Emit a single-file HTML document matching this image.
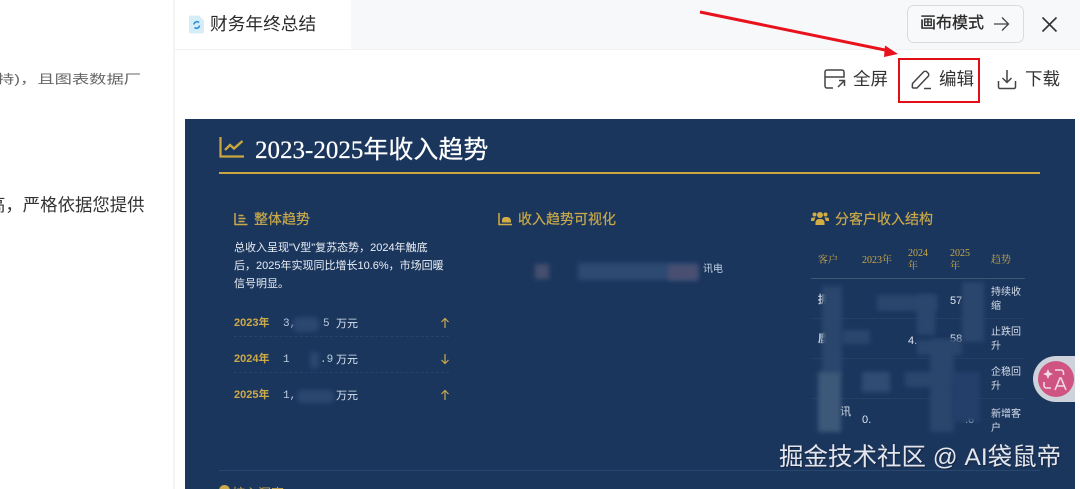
<!DOCTYPE html>
<html lang="zh">
<head>
<meta charset="utf-8">
<style>
html,body{margin:0;padding:0;width:1080px;height:489px;overflow:hidden;background:#fff}
body{position:relative;font-family:"Liberation Sans","Noto Sans CJK SC",sans-serif;color:#222}
.a{position:absolute;white-space:nowrap;line-height:1}
.b{position:absolute;filter:blur(2.500px)}
.g{color:#c9a94a;-webkit-text-stroke:.2px #c9a94a}
.yr{left:234px;font-size:11px;font-weight:700;color:#cdaa48}
.val{font-family:"Liberation Mono","Noto Sans CJK SC",monospace;font-size:11px;color:#bccbe0}
.unit{left:336px;font-size:11px;color:#dbe4f0}
.arr{position:absolute;left:440px}
.th{font-family:"Liberation Serif","Noto Serif CJK SC",serif;font-size:10px;color:#c9a94a;line-height:13px}
.td{font-size:10px;color:#d5dde8;line-height:14px;left:991px}
.line{position:absolute;height:1px}
</style>
</head>
<body>
<!-- left panel -->
<div class="a" style="left:-3px;top:71px;font-size:17.300px;color:#666;transform:scaleY(.72)">持)，且图表数据厂</div>
<div class="a" style="left:-12px;top:197px;font-size:17.400px;color:#333">高，严格依据您提供</div>
<div style="position:absolute;left:173px;top:0;width:2px;height:489px;background:#f3f4f6"></div>

<!-- tab bar -->
<div style="position:absolute;left:175px;top:0;right:0;height:50px;background:#f7f8fa"></div>
<div style="position:absolute;left:175px;top:0;width:176px;height:50px;background:#fff"></div>
<div style="position:absolute;left:175px;top:49px;right:0;height:1px;background:#f1f2f4"></div>
<svg style="position:absolute;left:189px;top:15px" width="16" height="19" viewBox="0 0 16 19">
<path d="M2 .5h8l5 5v11a2 2 0 0 1-2 2H2a2 2 0 0 1-2-2V2.500A2 2 0 0 1 2 .5z" fill="#d5ecf9"/>
<path d="M5 9.500a3 3 0 0 1 5-2M10.500 10.500a3 3 0 0 1-5 2" fill="none" stroke="#2b8fd8" stroke-width="1.600"/>
</svg>
<div class="a" style="left:210px;top:16px;font-size:17.700px;color:#2b2b2b">财务年终总结</div>

<div style="position:absolute;left:907px;top:5px;width:115px;height:36px;border:1px solid #d9dbe0;border-radius:7px;background:#f8f9fa"></div>
<div class="a" style="left:920px;top:16px;font-size:16px;color:#2a2a2a;-webkit-text-stroke:.3px #2a2a2a">画布模式</div>
<svg style="position:absolute;left:992px;top:14px" width="18" height="20" viewBox="0 0 18 20" fill="none" stroke="#444" stroke-width="1.300"><path d="M2 10h14M10 3.500l6.500 6.500-6.500 6.500"/></svg>
<svg style="position:absolute;left:1041px;top:16px" width="17" height="17" viewBox="0 0 17 17" fill="none" stroke="#333" stroke-width="1.600"><path d="M1.500 1.500l14 14M15.500 1.500l-14 14"/></svg>

<!-- toolbar -->
<svg style="position:absolute;left:824px;top:69px" width="22" height="21" viewBox="0 0 22 21" fill="none" stroke="#444" stroke-width="1.500"><path d="M9 19H3a2 2 0 0 1-2-2V3a2 2 0 0 1 2-2h15a2 2 0 0 1 2 2v5H1"/><path d="M14 18l6-6M15 11.500h5.500V17"/></svg>
<div class="a" style="left:853px;top:71px;font-size:17.500px;color:#333">全屏</div>
<svg style="position:absolute;left:910px;top:68px" width="23" height="23" viewBox="0 0 23 23" fill="none" stroke="#444" stroke-width="1.500"><path d="M2.500 15.500L13.500 4a2.500 2.500 0 0 1 3.500 0l1 1a2.500 2.500 0 0 1 0 3.500L7 20H3.500a1.200 1.200 0 0 1-1.200-1.200z"/><path d="M14 20.500h7"/></svg>
<div class="a" style="left:939px;top:71px;font-size:17.500px;color:#333">编辑</div>
<svg style="position:absolute;left:997px;top:69px" width="20" height="21" viewBox="0 0 20 21" fill="none" stroke="#444" stroke-width="1.500"><path d="M10 1v12M5.500 9l4.500 4.500L14.500 9M1.500 12v6a1.500 1.500 0 0 0 1.500 1.500h14a1.500 1.500 0 0 0 1.500-1.500v-6"/></svg>
<div class="a" style="left:1025px;top:71px;font-size:17.500px;color:#333">下载</div>

<!-- navy doc -->
<div style="position:absolute;left:185px;top:119px;width:890px;height:370px;background:#1b365d"></div>

<svg style="position:absolute;left:219px;top:136px" width="26" height="23" viewBox="0 0 26 23" fill="none" stroke="#c9a63f" stroke-width="2.200"><path d="M1.500 1v19.500H25"/><path d="M6 14l5-5 4 3.500L23.500 5" stroke-width="2.400"/></svg>
<div class="a" style="left:255px;top:138px;font-size:25px;color:#fff;-webkit-text-stroke:.2px #fff;font-family:'Liberation Serif','Noto Sans CJK SC',serif">2023-2025年收入趋势</div>
<div style="position:absolute;left:219px;top:172px;width:821px;height:1.500px;background:#c9a63f"></div>

<!-- col 1 -->
<svg style="position:absolute;left:234px;top:212px" width="14" height="14" viewBox="0 0 14 14" fill="none" stroke="#c9a94a" stroke-width="1.500"><path d="M1 1v11.500h12.500M4.500 3.500h5M4.500 6.500h7M4.500 9.500h6"/></svg>
<div class="a g" style="left:254px;top:212px;font-size:14px">整体趋势</div>
<div class="a" style="left:234px;top:239px;font-size:11px;line-height:18px;color:#eaeff5;white-space:normal;width:215px">总收入呈现"V型"复苏态势，2024年触底后，2025年实现同比增长10.6%，市场回暖信号明显。</div>

<div class="a yr" style="top:318px">2023年</div>
<div class="a val" style="left:283px;top:319px">3,</div>
<div class="a val" style="left:323px;top:319px">5</div>
<div class="a unit" style="top:319px">万元</div>
<svg class="arr" style="top:317px" width="10" height="12" viewBox="0 0 10 12" fill="none" stroke="#c9a94a" stroke-width="1.200"><path d="M5 11V1.500M1.500 5L5 1.500 8.500 5"/></svg>
<div class="line" style="left:234px;top:336px;width:215px;border-top:1px dashed #264469;height:0"></div>

<div class="a yr" style="top:354px">2024年</div>
<div class="a val" style="left:283px;top:355px">1</div>
<div class="a val" style="left:320px;top:355px">.9</div>
<div class="a unit" style="top:355px">万元</div>
<svg class="arr" style="top:353px" width="10" height="12" viewBox="0 0 10 12" fill="none" stroke="#c9a94a" stroke-width="1.200"><path d="M5 1v9.500M1.500 7L5 10.500 8.500 7"/></svg>
<div class="line" style="left:234px;top:372px;width:215px;border-top:1px dashed #264469;height:0"></div>

<div class="a yr" style="top:390px">2025年</div>
<div class="a val" style="left:283px;top:391px">1,</div>
<div class="a unit" style="top:391px">万元</div>
<svg class="arr" style="top:389px" width="10" height="12" viewBox="0 0 10 12" fill="none" stroke="#c9a94a" stroke-width="1.200"><path d="M5 11V1.500M1.500 5L5 1.500 8.500 5"/></svg>

<div class="b" style="left:293px;top:317px;width:26px;height:15px;background:#2a4770;border-radius:5px"></div>
<div class="b" style="left:310px;top:352px;width:9px;height:16px;background:#2a4770"></div>
<div class="b" style="left:297px;top:390px;width:37px;height:13px;background:#2a4770;border-radius:5px"></div>

<div class="line" style="left:219px;top:470px;width:821px;background:#28476e"></div>
<div style="position:absolute;left:219px;top:485px;width:11px;height:11px;border-radius:50%;background:#c9a94a"></div>
<div class="a" style="left:232px;top:487px;font-size:13px;color:#c9a94a">核心洞察</div>

<!-- col 2 -->
<svg style="position:absolute;left:498px;top:212px" width="15" height="14" viewBox="0 0 15 14"><path d="M1 1v11.500h13" fill="none" stroke="#d2ad45" stroke-width="1.500"/><path d="M4 10.500V8a3 3 0 0 1 3-3h2a4 4 0 0 1 4 4v1.500z" fill="#d2ad45"/></svg>
<div class="a g" style="left:518px;top:212px;font-size:14px">收入趋势可视化</div>
<div class="b" style="left:535px;top:264px;width:14px;height:15px;background:#454f6e"></div>
<div class="b" style="left:578px;top:263px;width:120px;height:17px;background:#2d4a72"></div>
<div class="b" style="left:668px;top:265px;width:30px;height:15px;background:#4a4f72"></div>
<div class="a" style="left:703px;top:265px;font-size:10px;color:#c5d3e6">讯电</div>

<!-- col 3 -->
<svg style="position:absolute;left:811px;top:211px" width="18" height="15" viewBox="0 0 18 15" fill="#d2ad45"><circle cx="9" cy="4" r="3"/><circle cx="3.500" cy="3.500" r="2"/><circle cx="14.500" cy="3.500" r="2"/><path d="M4.500 14v-2.500A3.500 3.500 0 0 1 8 8h2a3.500 3.500 0 0 1 3.500 3.500V14z"/><path d="M0 10V8.500A2 2 0 0 1 2 6.500h2.500L3 10zM18 10V8.500a2 2 0 0 0-2-2h-2.500L15 10z"/></svg>
<div class="a g" style="left:835px;top:212px;font-size:14px">分客户收入结构</div>

<div class="a th" style="left:818px;top:254px">客户</div>
<div class="a th" style="left:862px;top:254px">2023年</div>
<div class="a th" style="left:908px;top:247px">2024<br>年</div>
<div class="a th" style="left:950px;top:247px">2025<br>年</div>
<div class="a th" style="left:991px;top:254px">趋势</div>
<div class="line" style="left:811px;top:278px;width:214px;background:#3d5876"></div>
<div class="line" style="left:811px;top:318px;width:214px;background:#253f66"></div>
<div class="line" style="left:811px;top:358px;width:214px;background:#253f66"></div>
<div class="line" style="left:811px;top:398px;width:214px;background:#253f66"></div>

<div class="a td" style="top:286px">持续收<br>缩</div>
<div class="a td" style="top:326px">止跌回<br>升</div>
<div class="a td" style="top:366px">企稳回<br>升</div>
<div class="a td" style="top:408px">新增客<br>户</div>
<div class="a" style="left:950px;top:296px;font-size:11px;color:#dfe6ef">57</div>
<div class="a" style="left:950px;top:334px;font-size:11px;color:#dfe6ef">58</div>
<div class="a" style="left:908px;top:336px;font-size:11px;color:#dfe6ef">4.</div>
<div class="a" style="left:862px;top:415px;font-size:11px;color:#dfe6ef">0.</div>
<div class="a" style="left:965px;top:415px;font-size:11px;color:#dfe6ef">.6</div>
<div class="a" style="left:818px;top:295px;font-size:11px;font-weight:700;color:#e6ebf2">拥</div>
<div class="a" style="left:818px;top:334px;font-size:11px;font-weight:700;color:#e6ebf2">鹿</div>
<div class="a" style="left:840px;top:407px;font-size:11px;color:#dfe6ef">讯</div>

<div class="b" style="left:822px;top:286px;width:20px;height:90px;background:#2a466d"></div>
<div class="b" style="left:818px;top:372px;width:23px;height:60px;background:#3d5879"></div>
<div class="b" style="left:842px;top:330px;width:28px;height:14px;background:#2a466d"></div>
<div class="b" style="left:877px;top:295px;width:60px;height:16px;background:#2a466d"></div>
<div class="b" style="left:917px;top:295px;width:18px;height:40px;background:#2a466d"></div>
<div class="b" style="left:917px;top:340px;width:45px;height:15px;background:#2a466d"></div>
<div class="b" style="left:930px;top:340px;width:24px;height:92px;background:#2a466d"></div>
<div class="b" style="left:862px;top:372px;width:28px;height:20px;background:#304c73"></div>
<div class="b" style="left:905px;top:372px;width:50px;height:15px;background:#2a466d"></div>
<div class="b" style="left:962px;top:282px;width:22px;height:60px;background:#2a466d"></div>
<div class="b" style="left:952px;top:372px;width:28px;height:50px;background:#24406a"></div>

<!-- floating button -->
<div style="position:absolute;left:1033px;top:356px;width:42px;height:46px;background:#ced2da;border-radius:23px 0 0 23px"></div>
<div style="position:absolute;left:1034px;top:361px;width:41px;height:36px;overflow:hidden"><div style="position:absolute;left:4px;top:0;width:36px;height:36px;border-radius:50%;background:#cf5482"></div></div>
<svg style="position:absolute;left:1042px;top:368px" width="30" height="24" viewBox="0 0 30 24" fill="none" stroke="#f1dbe4" stroke-width="1.600"><path d="M6 1l1.500 3.500L11 6 7.500 7.500 6 11 4.500 7.500 1 6l3.500-1.500z" fill="#f1dbe4" stroke="none"/><path d="M13 2h6a2.500 2.500 0 0 1 2.500 2.500V7M2 14v3.500A2.500 2.500 0 0 0 4.500 20H9"/><path d="M13 22l5-12h1l5 12M15 18h8"/></svg>

<!-- watermark -->
<div class="a" style="left:779px;top:446px;font-size:24.500px;color:#e4e6ee;text-shadow:1px 1px 1px rgba(20,30,50,.7)">掘金技术社区 @ AI袋鼠帝</div>

<!-- annotation -->
<div style="position:absolute;left:898px;top:58px;width:78px;height:41px;border:2.500px solid #e10e18"></div>
<svg style="position:absolute;left:0;top:0" width="1080" height="489" viewBox="0 0 1080 489">
<path d="M700 12L890 51" stroke="#e8111c" stroke-width="3" fill="none"/>
<path d="M898 54L885 45.500 884 57z" fill="#e8111c"/>
</svg>
</body>
</html>
